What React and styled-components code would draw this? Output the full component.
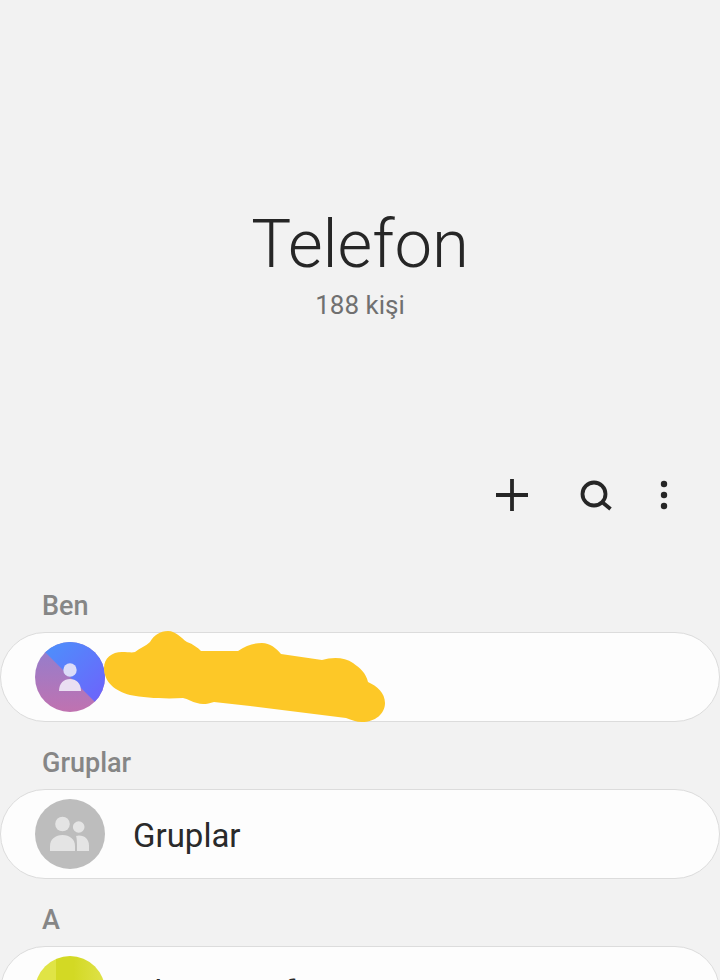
import React from "react";
import styled, { createGlobalStyle } from "styled-components";

const Global = createGlobalStyle`
  html, body {
    margin: 0;
    padding: 0;
    background: #f2f2f2;
  }
  body {
    font-family: Roboto, "Noto Sans", sans-serif;
  }
`;

const Page = styled.div`
  width: 720px;
  height: 980px;
  overflow: hidden;
  background: #f2f2f2;
  display: flex;
  flex-direction: column;
`;

const Header = styled.header`
  height: 471px;
  flex-shrink: 0;
  padding-top: 205px;
  box-sizing: border-box;
  display: flex;
  flex-direction: column;
  align-items: center;
`;

const Title = styled.h1`
  margin: 0;
  font-size: 67px;
  line-height: 78px;
  font-weight: 300;
  color: #262626;
`;

const Count = styled.div`
  margin-top: 5px;
  font-size: 26px;
  line-height: 34px;
  color: #707070;
`;

const Toolbar = styled.div`
  height: 48px;
  flex-shrink: 0;
  display: flex;
  justify-content: flex-end;
  align-items: center;
  gap: 36px;
  padding-right: 48px;
`;

const ToolButton = styled.button`
  width: ${(p) => p.$width || 48}px;
  height: 48px;
  padding: 0;
  border: none;
  background: none;
  display: flex;
  align-items: center;
  justify-content: center;
`;

const Sections = styled.div`
  flex-shrink: 0;
  display: flex;
  flex-direction: column;
  padding-top: 68px;
`;

const SectionLabel = styled.div`
  height: 45px;
  flex-shrink: 0;
  padding-left: 42px;
  font-size: 27px;
  font-weight: 500;
  line-height: 38px;
  color: #868686;
`;

const Card = styled.div`
  height: 90px;
  box-sizing: border-box;
  flex-shrink: 0;
  margin-bottom: 22px;
  border: 1px solid #dcdcdc;
  border-radius: 45px;
  background: #fdfdfd;
  display: flex;
  align-items: center;
  padding-left: 34px;
  position: relative;
`;

const Avatar = styled.div`
  width: 70px;
  height: 70px;
  border-radius: 50%;
  flex-shrink: 0;
  overflow: hidden;
  display: flex;
  align-items: center;
  justify-content: center;
  background: ${(p) => p.$bg};
`;

const Name = styled.div`
  margin: 2px 0 0 28px;
  font-size: 33px;
  color: #2a2a2a;
`;

const Scribble = styled.svg`
  position: absolute;
  left: -1px;
  top: -11px;
  pointer-events: none;
`;

const App = () => (
  <Page>
    <Global />
    <Header>
      <Title>Telefon</Title>
      <Count>188 kişi</Count>
    </Header>
    <Toolbar>
      <ToolButton aria-label="Ekle">
        <svg width="36" height="36" viewBox="0 0 36 36">
          <path d="M18 2v32M2 18h32" stroke="#262626" strokeWidth="3.8" fill="none" />
        </svg>
      </ToolButton>
      <ToolButton aria-label="Ara">
        <svg width="36" height="36" viewBox="0 0 36 36">
          <circle cx="16" cy="17" r="11.500" stroke="#262626" strokeWidth="3.8" fill="none" />
          <path d="M24 25l8.500 7" stroke="#262626" strokeWidth="3.8" fill="none" />
        </svg>
      </ToolButton>
      <ToolButton $width={16} aria-label="Daha fazla">
        <svg width="12" height="36" viewBox="0 0 12 36">
          <circle cx="6" cy="7" r="3.2" fill="#262626" />
          <circle cx="6" cy="18" r="3.2" fill="#262626" />
          <circle cx="6" cy="29" r="3.2" fill="#262626" />
        </svg>
      </ToolButton>
    </Toolbar>
    <Sections>
      <SectionLabel>Ben</SectionLabel>
      <Card>
        <Avatar $bg="linear-gradient(to bottom, #8f7fd0, #c072b0)">
          <svg width="70" height="70" viewBox="0 0 70 70">
            <defs>
              <linearGradient id="me" x1="0.3" y1="0" x2="1" y2="0.7">
                <stop offset="0" stopColor="#4f8dfb" />
                <stop offset="1" stopColor="#6b66fb" />
              </linearGradient>
            </defs>
            <path d="M0 0L70 70V0Z" fill="url(#me)" />
            <circle cx="35" cy="28" r="6.700" fill="#dcdcf8" />
            <path d="M24 49c0-8 5-12 11-12s11 4 11 12z" fill="#eadff2" />
          </svg>
        </Avatar>
        {/* marker scribble over the hidden name */}
        <Scribble width="400" height="110" viewBox="0 622 400 110">
          <path
            fill="#fdc827"
            d="M104 668C104 658 112 652 122 652C128 652 132 653 135 652C140 648 146 646 150 642C154 635 160 631 168 631C176 631 181 638 187 642C193 644 198 648 201 651L238 651C246 645 254 643 262 643C270 643 276 648 281 654L322 660C332 657 345 657 353 663C360 668 366 673 368 682C377 686 385 693 385 703C385 714 375 722 362 722C356 722 352 720 346 718L250 706L214 702C208 704 202 705 197 703C192 702 188 699 183 698C165 699 145 698 130 695C115 691 104 682 104 668Z"
          />
        </Scribble>
      </Card>
      <SectionLabel>Gruplar</SectionLabel>
      <Card>
        <Avatar $bg="#bdbdbd">
          <svg width="70" height="70" viewBox="0 0 70 70">
            <circle cx="27.500" cy="25" r="7.300" fill="#e4e4e4" />
            <circle cx="43.700" cy="28" r="5.800" fill="#e4e4e4" />
            <path d="M15 52v-5c0-7 5.500-11 12.500-11s12.500 4 12.500 11v5z" fill="#e4e4e4" />
            <path d="M41 37c1-.3 2-.5 3-.5 6 0 10 4 10 10v5.500H42v-5c0-4-.2-7.500-1-10.500z" fill="#e4e4e4" />
          </svg>
        </Avatar>
        <Name>Gruplar</Name>
      </Card>
      <SectionLabel>A</SectionLabel>
      <Card>
        <Avatar $bg="linear-gradient(to right, #e0e445 0 30%, #d3d924 30% 55%, #dfe24a 100%)" />
        <Name>Abone tarif</Name>
      </Card>
    </Sections>
  </Page>
);

export default App;
